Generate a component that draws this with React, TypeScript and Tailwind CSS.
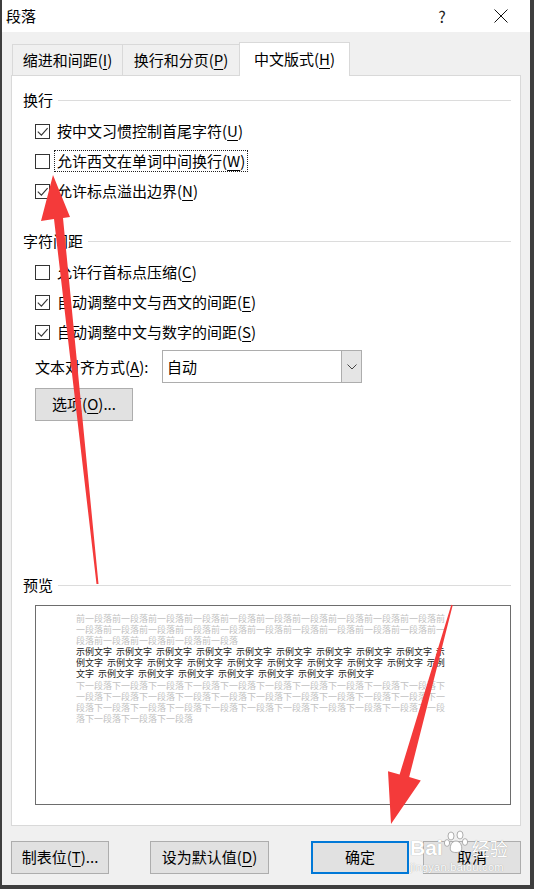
import React from "react";

const PREV = "前一段落".repeat(25);
const PREV_LINES = [PREV.slice(0, 41), PREV.slice(41, 82), PREV.slice(82)];
const NEXT = "下一段落".repeat(34);
const NEXT_LINES = [NEXT.slice(0, 41), NEXT.slice(41, 82), NEXT.slice(82, 123), NEXT.slice(123)];
const W = "示例文字";
const SAMPLE = [
  { parts: [...Array(9).fill(W), "示"], full: true },
  { parts: ["例文字", ...Array(8).fill(W), "示例"], full: true },
  { parts: ["文字", ...Array(7).fill(W)], full: false },
];

function Mn({ children }: { children: React.ReactNode }) {
  return <span className="underline decoration-1 underline-offset-[3px]">{children}</span>;
}

function Section({ title }: { title: string }) {
  return (
    <div className="flex h-[20px] items-center">
      <span className="leading-[20px]">{title}</span>
      <div className="ml-[5px] h-px flex-1 bg-[#dcdcdc]" />
    </div>
  );
}

function CheckRow({ checked, text, k, focus }: { checked?: boolean; text: string; k: string; focus?: boolean }) {
  return (
    <div className="flex h-[30px] items-center pl-[12px]">
      <div className="flex h-[15px] w-[15px] shrink-0 items-center justify-center border border-[#333333] bg-white">
        {checked && (
          <svg width="13" height="13" viewBox="0 0 13 13">
            <path d="M1.8 6.6 L5.4 10.2 L11.6 3.2" fill="none" stroke="#333" strokeWidth="1.1" />
          </svg>
        )}
      </div>
      <span
        className={
          focus
            ? "ml-[4px] border border-dotted border-[#222] px-[2px] leading-[20px]"
            : "ml-[7px] leading-[20px]"
        }
      >
        {text}(<Mn>{k}</Mn>)
      </span>
    </div>
  );
}

function Btn({ className, children }: { className: string; children: React.ReactNode }) {
  return (
    <div className={`flex h-[33px] items-center justify-center bg-[#e1e1e1] ${className}`}>{children}</div>
  );
}

export default function App() {
  return (
    <div className="relative h-[889px] w-[534px] overflow-hidden bg-[#3e3e3e] pb-[4px] pl-[2px] pr-[4px] font-['Noto_Sans_CJK_SC',sans-serif] text-[15px] text-black">
      <div className="flex h-full flex-col bg-[#f0f0f0]">
        {/* title bar */}
        <div className="flex h-[32px] shrink-0 items-center bg-white pl-[4px] pr-[14px]">
          <span className="leading-[20px]">段落</span>
          <div className="ml-auto flex items-center">
            <span className="w-[30px] text-center text-[16px] leading-[20px] text-[#222]">?</span>
            <span className="ml-[29px] flex w-[30px] justify-center">
              <svg width="14" height="14" viewBox="0 0 14 14">
                <path d="M0.5 0.5 L13.5 13.5 M13.5 0.5 L0.5 13.5" stroke="#111" strokeWidth="1" />
              </svg>
            </span>
          </div>
        </div>

        <div className="flex flex-1 flex-col px-[9px] pt-[10px]">
          {/* tabs */}
          <div className="flex items-end pl-[1px]">
            <div className="flex h-[31px] w-[111px] items-center justify-center border border-b-0 border-[#d9d9d9] bg-[#f0f0f0]">
              缩进和间距(<Mn>I</Mn>)
            </div>
            <div className="-ml-px flex h-[31px] w-[118px] items-center justify-center border border-b-0 border-[#d9d9d9] bg-[#f0f0f0]">
              换行和分页(<Mn>P</Mn>)
            </div>
            <div className="relative z-10 -mb-px -ml-px flex h-[34px] w-[111px] items-center justify-center border border-b-0 border-[#d9d9d9] bg-white">
              中文版式(<Mn>H</Mn>)
            </div>
          </div>

          {/* panel */}
          <div className="h-[751px] border border-[#d9d9d9] bg-white pl-[11px] pr-[9px] pt-[14px]">
            <Section title="换行" />
            <div className="h-[6px]" />
            <CheckRow checked text="按中文习惯控制首尾字符" k="U" />
            <CheckRow text="允许西文在单词中间换行" k="W" focus />
            <CheckRow checked text="允许标点溢出边界" k="N" />

            <div className="h-[25px]" />
            <Section title="字符间距" />
            <div className="h-[6px]" />
            <CheckRow text="允许行首标点压缩" k="C" />
            <CheckRow checked text="自动调整中文与西文的间距" k="E" />
            <CheckRow checked text="自动调整中文与数字的间距" k="S" />

            <div className="mt-[3px] flex items-center pl-[12px]">
              <span className="w-[127px] leading-[20px]">
                文本对齐方式(<Mn>A</Mn>):
              </span>
              <div className="flex h-[33px] w-[200px] border border-[#adadad] bg-white">
                <span className="flex-1 pl-[4px] leading-[31px]">自动</span>
                <div className="flex w-[20px] items-center justify-center border-l border-[#adadad] bg-[#e5e5e5]">
                  <svg width="10" height="6" viewBox="0 0 10 6">
                    <path d="M0.5 0.5 L5 5 L9.5 0.5" fill="none" stroke="#444" strokeWidth="1" />
                  </svg>
                </div>
              </div>
            </div>

            <Btn className="ml-[12px] mt-[5px] w-[98px] border border-[#adadad]">
              选项(<Mn>O</Mn>)...
            </Btn>

            <div className="h-[154px]" />
            <Section title="预览" />

            <div className="ml-[12px] mt-[10px] h-[200px] border border-[#6d6d6d] bg-white pl-[40px] pt-[7px] text-[9px] leading-[11.1px]">
              {PREV_LINES.map((l, i) => (
                <div key={`p${i}`} className="whitespace-nowrap text-[#c2c2c2]">
                  {l}
                </div>
              ))}
              {SAMPLE.map((l, i) => (
                <div
                  key={`s${i}`}
                  className={
                    l.full
                      ? "flex w-[369px] justify-between whitespace-nowrap text-[#222]"
                      : "flex gap-[4px] whitespace-nowrap text-[#222]"
                  }
                >
                  {l.parts.map((p, j) => (
                    <span key={j}>{p}</span>
                  ))}
                </div>
              ))}
              {NEXT_LINES.map((l, i) => (
                <div key={`n${i}`} className="whitespace-nowrap text-[#c2c2c2]">
                  {l}
                </div>
              ))}
            </div>
          </div>

          {/* buttons */}
          <div className="mt-[15px] flex">
            <Btn className="w-[98px] border border-[#adadad]">
              制表位(<Mn>T</Mn>)...
            </Btn>
            <Btn className="ml-[41px] w-[119px] border border-[#adadad]">
              设为默认值(<Mn>D</Mn>)
            </Btn>
            <Btn className="ml-auto w-[98px] border-2 border-[#0078d7]">确定</Btn>
            <Btn className="ml-[14px] w-[98px] border border-[#adadad]">取消</Btn>
          </div>
        </div>
      </div>

      {/* red annotation arrows */}
      <svg className="pointer-events-none absolute left-0 top-0" width="534" height="889" viewBox="0 0 534 889">
        <polygon
          points="53,175 70,217 63,218 98.5,584 96.5,584 54,219 41,221"
          fill="#f43a3a"
        />
        <polygon
          points="391,824 388,771.2 399.6,774.5 451.3,604.8 452.7,605.2 409.2,777.1 420.8,780.4"
          fill="#f43a3a"
        />
      </svg>

      {/* watermark */}
      <div className="pointer-events-none absolute left-[410px] top-[830px] text-white [text-shadow:0_0_1px_#8f8f8f]">
        <div className="flex items-end">
          <span className="font-['Liberation_Sans',sans-serif] text-[21px] font-bold leading-[24px]">Bai</span>
          <svg className="mb-[6px] ml-[1px]" width="26" height="24" viewBox="0 0 26 24">
            <g fill="white" stroke="#9a9a9a" strokeWidth="0.8">
              <ellipse cx="7" cy="6" rx="3" ry="4" />
              <ellipse cx="16" cy="5" rx="3" ry="4" />
              <ellipse cx="3" cy="13" rx="2.6" ry="3.4" />
              <ellipse cx="21" cy="12" rx="2.6" ry="3.4" />
              <path d="M12 11 C7 11 5 18 7 21 C9 23 15 23 17 21 C19 18 17 11 12 11 Z" />
            </g>
          </svg>
          <span className="ml-[2px] text-[18px] leading-[24px]">经验</span>
        </div>
        <div className="font-['Liberation_Sans',sans-serif] text-[11px] leading-[14px] tracking-[0.3px]">jingyan.baidu.com</div>
      </div>
    </div>
  );
}
